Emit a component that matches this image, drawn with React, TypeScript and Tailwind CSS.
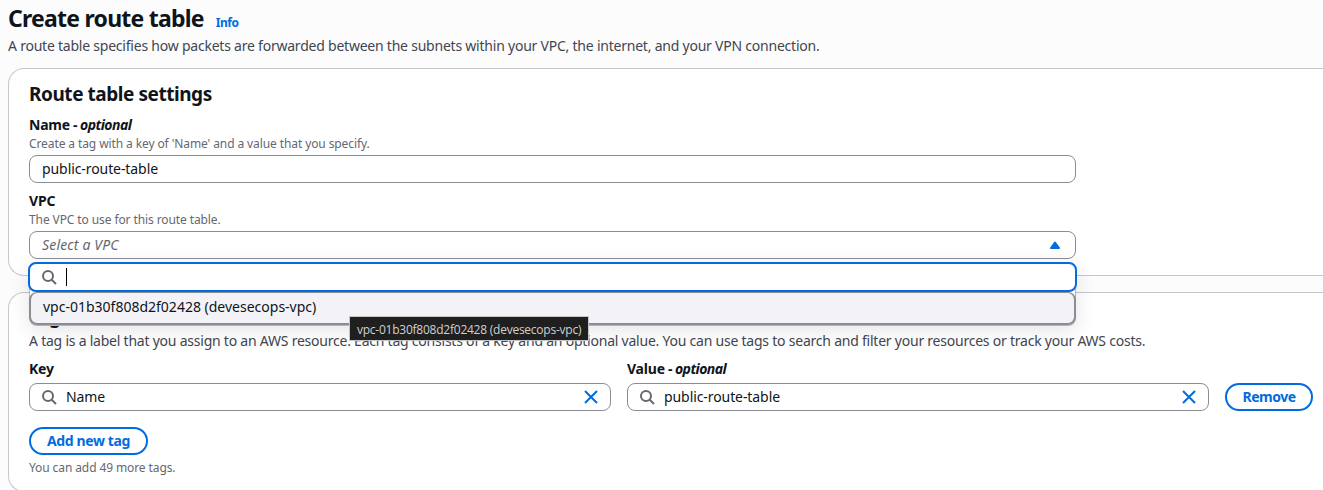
import React from "react";

function SearchIcon() {
  return (
    <svg viewBox="0 0 16 16" className="h-4 w-4 shrink-0 fill-none stroke-[#656871] stroke-2">
      <circle cx="7" cy="7" r="5" />
      <path d="m15 15-4.5-4.5" />
    </svg>
  );
}

function CloseIcon() {
  return (
    <svg viewBox="0 0 16 16" className="h-4 w-4 shrink-0 fill-none stroke-[#006ce0] stroke-2">
      <path d="m2 2 12 12M14 2 2 14" />
    </svg>
  );
}

function CaretUpIcon() {
  return (
    <svg viewBox="0 0 16 16" className="h-4 w-4 shrink-0 fill-[#006ce0] stroke-[#006ce0] stroke-2">
      <path d="M4 11h8L8 5.6z" strokeLinejoin="round" />
    </svg>
  );
}

function Label({ children, optional }: { children: React.ReactNode; optional?: boolean }) {
  return (
    <div className="h-5 text-[14px] leading-5 font-bold tracking-[-0.2px] whitespace-nowrap">
      {children}
      {optional && (
        <span className="tracking-[-0.55px]">
          {" "}- <i>optional</i>
        </span>
      )}
    </div>
  );
}

function Hint({ children }: { children: React.ReactNode }) {
  return <div className="h-4 pt-px text-[12px] leading-4 tracking-[-0.1px] whitespace-nowrap text-[#656871]">{children}</div>;
}

function TagInput({ value }: { value: string }) {
  return (
    <div className="mt-1 flex h-7 w-[582px] items-center rounded-lg border border-[#8c8c94] bg-white px-[11px]">
      <SearchIcon />
      <span className="ml-[9px] flex-1 tracking-[-0.08px]">{value}</span>
      <CloseIcon />
    </div>
  );
}

export default function App() {
  return (
    <div className="flex h-[490px] w-full flex-col overflow-hidden bg-[#fcfcfd] pl-2 font-['Noto_Sans',sans-serif] text-[14px] leading-5 text-[#0f141a]">
      <header className="h-[68px] shrink-0 pt-1">
        <div className="flex h-8 items-baseline whitespace-nowrap">
          <h1 className="text-[23px] leading-[29px] font-bold tracking-[-0.76px]">Create route table</h1>
          <a className="ml-3 text-[12px] font-bold tracking-[-0.5px] text-[#006ce0]">Info</a>
        </div>
        <p className="tracking-[-0.224px] whitespace-nowrap text-[#424650]">
          A route table specifies how packets are forwarded between the subnets within your VPC, the internet, and your VPN connection.
        </p>
      </header>

      <section className="h-[208px] shrink-0 rounded-l-2xl border border-r-0 border-[#c6c6cd] bg-white pt-[13px] pl-5">
        <h2 className="h-6 text-[19px] leading-6 font-bold tracking-[-0.45px] whitespace-nowrap">Route table settings</h2>
        <div className="mt-[9px]">
          <Label optional>Name</Label>
          <Hint>Create a tag with a key of 'Name' and a value that you specify.</Hint>
          <div className="mt-1 flex h-7 w-[1047px] items-center rounded-lg border border-[#8c8c94] px-3 tracking-[-0.08px]">public-route-table</div>
        </div>
        <div className="mt-2">
          <Label>VPC</Label>
          <Hint>The VPC to use for this route table.</Hint>
          <div className="relative mt-1 w-[1047px]">
            <div className="flex h-7 items-center justify-between rounded-lg border border-[#8c8c94] px-3 text-[#656871]">
              <i className="tracking-[0.16px]">Select a VPC</i>
              <CaretUpIcon />
            </div>
            <div className="absolute top-8 left-0 z-10 h-[63px] w-[1047px] rounded-lg border border-t-0 border-[#b4b4bb] bg-white shadow-[0_4px_20px_1px_rgba(0,7,22,0.1)]">
              <div className="relative z-10 -mx-[2px] -mt-px flex h-[30px] items-center rounded-lg border-2 border-[#006ce0] bg-white pl-[11px]">
                <SearchIcon />
                <span className="ml-[9px] h-[18px] w-px bg-black" />
              </div>
              <div className="-mx-px flex h-[33px] items-center rounded-lg border-2 border-t border-[#8c8c94] bg-[#f3f3f7] pb-[2px] pl-3 text-[#0f141a]">
                vpc-01b30f808d2f02428 (devesecops-vpc)
              </div>
            </div>
            <div className="absolute top-[85px] left-[320px] z-20 flex h-[25px] w-[240px] items-center border border-[#c6c6c6] bg-[#1f1f1f] pt-[2px] pl-[7px] font-['Open_Sans',sans-serif] text-[12px] tracking-[-0.24px] whitespace-nowrap text-[#d0d0d0]">
              vpc-01b30f808d2f02428 (devesecops-vpc)
            </div>
          </div>
        </div>
      </section>

      <section className="mt-4 h-[200px] shrink-0 rounded-l-2xl border border-r-0 border-[#c6c6cd] bg-white pt-[12px] pl-5">
        <h2 className="h-6 text-[19px] leading-[22px] font-bold tracking-[-0.45px]">Tags</h2>
        <p className="mt-[2px] tracking-[-0.227px] whitespace-nowrap text-[#424650]">
          A tag is a label that you assign to an AWS resource. Each tag consists of a key and an optional value. You can use tags to search and filter your resources or track your AWS costs.
        </p>
        <div className="mt-2 flex items-end gap-4">
          <div>
            <Label>Key</Label>
            <TagInput value="Name" />
          </div>
          <div>
            <Label optional>Value</Label>
            <TagInput value="public-route-table" />
          </div>
          <button className="h-7 w-[88px] rounded-full border-2 border-[#006ce0] font-bold tracking-[-0.5px] text-[#006ce0]">Remove</button>
        </div>
        <button className="mt-4 h-7 w-[119px] rounded-full border-2 border-[#006ce0] font-bold tracking-[-0.36px] whitespace-nowrap text-[#006ce0]">
          Add new tag
        </button>
        <div className="mt-1">
          <Hint>You can add 49 more tags.</Hint>
        </div>
      </section>
    </div>
  );
}
